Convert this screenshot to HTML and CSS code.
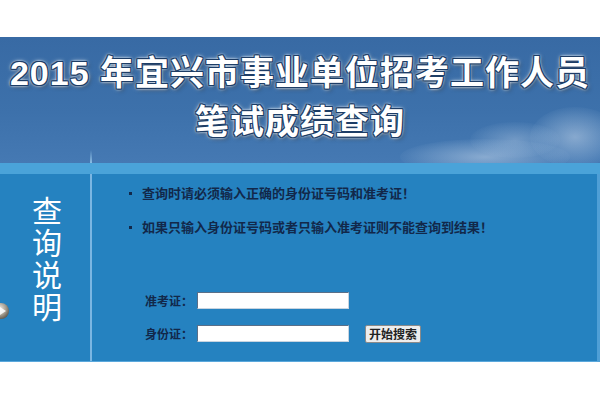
FILE: index.html
```html
<!DOCTYPE html>
<html lang="zh-CN">
<head>
<meta charset="utf-8">
<title>笔试成绩查询</title>
<link rel="stylesheet" href="styles.css">
</head>
<body>
<div class="page">
  <header class="banner">
    <div class="cloud c1"></div>
    <div class="cloud c2"></div>
    <div class="cloud c3"></div>
    <h1 class="title">
      <span class="line1">2015 年宜兴市事业单位招考工作人员</span>
      <span class="line2">笔试成绩查询</span>
    </h1>
    <div class="divider-top"></div>
  </header>
  <div class="stripe"></div>
  <main class="main">
    <aside class="side">
      <span class="arrow">
        <svg width="12" height="18" viewBox="0 0 12 18">
          <defs>
            <radialGradient id="g" cx="40%" cy="35%" r="70%">
              <stop offset="0" stop-color="#f2efe8"/>
              <stop offset="0.6" stop-color="#a39b8e"/>
              <stop offset="1" stop-color="#5a5246"/>
            </radialGradient>
          </defs>
          <circle cx="1" cy="9" r="8" fill="url(#g)"/>
          <path d="M0 5 L6 9 L0 13 Z" fill="#fff" opacity="0.85"/>
        </svg>
      </span>
      <div class="vtext">查询说明</div>
    </aside>
    <section class="content">
      <ul class="notes">
        <li>查询时请必须输入正确的身份证号码和准考证！</li>
        <li>如果只输入身份证号码或者只输入准考证则不能查询到结果！</li>
      </ul>
      <form class="form">
        <div class="row">
          <label class="lbl">准考证：</label>
          <input class="field" type="text">
        </div>
        <div class="row">
          <label class="lbl">身份证：</label>
          <input class="field" type="text">
          <button class="btn" type="button">开始搜索</button>
        </div>
      </form>
    </section>
  </main>
</div>
</body>
</html>
```
FILE: styles.css
```css
html, body {
  margin: 0;
  padding: 0;
  background: #ffffff;
}
body {
  font-family: "Noto Sans CJK SC", "Liberation Sans", sans-serif;
}
.page {
  padding-top: 37px;
  width: 600px;
}
.banner {
  position: relative;
  height: 126px;
  background: linear-gradient(180deg, #386aa4 0%, #3d71ab 60%, #4579b3 100%);
  overflow: hidden;
}
.cloud {
  position: absolute;
  border-radius: 50%;
  background: radial-gradient(ellipse at center, rgba(220,232,245,0.45) 0%, rgba(200,220,240,0.18) 50%, rgba(200,220,240,0) 75%);
}
.c1 { left: 400px; top: 102px; width: 170px; height: 36px; }
.c2 { left: 530px; top: 70px; width: 90px; height: 60px; }
.c3 { left: 470px; top: 85px; width: 90px; height: 36px; opacity: 0.7; }
.title {
  position: relative;
  margin: 0;
  padding-top: 12px;
  text-align: center;
  font-family: "Liberation Sans", "Noto Sans CJK SC", sans-serif;
  font-size: 34px;
  font-weight: bold;
  letter-spacing: 1px;
  line-height: 49px;
  color: #ffffff;
  text-shadow:
    1px 0 0 #1d3d66, -1px 0 0 #1d3d66, 0 1px 0 #1d3d66, 0 -1px 0 #1d3d66,
    1px 1px 0 #1d3d66, -1px -1px 0 #1d3d66, 1px -1px 0 #1d3d66, -1px 1px 0 #1d3d66,
    0 0 3px #f0f5fb, 0 0 3px #f0f5fb, 0 0 5px #e8f0f8, 2px 2px 4px rgba(0,0,0,0.5);
}
.title span {
  display: block;
  white-space: nowrap;
}
.divider-top {
  position: absolute;
  left: 90px;
  top: 113px;
  width: 2px;
  height: 13px;
  background: linear-gradient(180deg, rgba(140,190,230,0) 0%, #8cbde3 100%);
}
.stripe {
  height: 11px;
  background: #4aa3d9;
}
.main {
  display: flex;
  height: 187px;
  background: #2582c0;
  border-bottom: 1px solid #5aa8dc;
  border-right: 3px solid #4f9fd6;
  box-sizing: content-box;
  width: 597px;
}
.side {
  position: relative;
  width: 90px;
  flex: none;
  border-right: 2px solid #7bb6e2;
}
.vtext {
  margin-top: 22px;
  margin-left: 32px;
  writing-mode: vertical-rl;
  text-orientation: upright;
  font-size: 30px;
  line-height: 30px;
  letter-spacing: 2px;
  color: #ffffff;
}
.arrow {
  position: absolute;
  left: 0;
  top: 128px;
  line-height: 0;
}
.content {
  flex: 1;
  padding-left: 36px;
}
.notes {
  margin: 10px 0 0 0;
  padding: 0;
  list-style: none;
  font-size: 13px;
  font-weight: bold;
  color: #12284a;
  line-height: 18px;
}
.notes li {
  margin-bottom: 16px;
  padding-left: 14px;
  position: relative;
}
.notes li::before {
  content: "";
  position: absolute;
  left: 1px;
  top: 8px;
  width: 3px;
  height: 3px;
  background: #12284a;
}
.form {
  margin-top: 56px;
  padding-left: 17px;
}
.row {
  display: flex;
  align-items: center;
  height: 17px;
  margin-bottom: 16px;
}
.lbl {
  width: 52px;
  font-size: 12px;
  font-weight: bold;
  color: #12284a;
}
.field {
  box-sizing: border-box;
  width: 152px;
  height: 17px;
  margin: 0;
  padding: 0 2px;
  border: 1px solid #5a6f88;
  border-right-color: #c8d4e0;
  border-bottom-color: #c8d4e0;
  background: #ffffff;
}
.btn {
  box-sizing: border-box;
  margin-left: 16px;
  height: 18px;
  width: 56px;
  padding: 0;
  font-family: "Noto Sans CJK SC", sans-serif;
  font-size: 12px;
  font-weight: bold;
  line-height: 14px;
  color: #222;
  background: #ededed;
  border: 1px solid #8a8a8a;
  border-radius: 2px;
}
```
